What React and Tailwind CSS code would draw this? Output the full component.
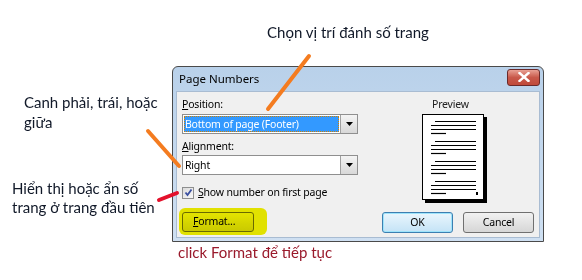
import React from "react";

function ComboArrow() {
  return (
    <div className="w-[17px] h-full border-l border-[#a0a0a0] bg-gradient-to-b from-[#f4f4f4] to-[#d8d8d8] flex items-center justify-center">
      <svg width="7" height="4" viewBox="0 0 7 4"><path d="M0 0h7L3.5 4z" fill="#000" /></svg>
    </div>
  );
}

function PreviewPage() {
  const groups = [121, 141, 161, 181];
  return (
    <svg width="66" height="90" viewBox="0 0 66 90" className="block">
      <rect x="3" y="3" width="62" height="86" fill="#000" />
      <rect x="0.5" y="0.5" width="61" height="85" fill="#fff" stroke="#000" />
      {groups.map((g, i) => {
        const y = g - 114;
        return (
          <g key={i} stroke="#000" strokeWidth="1.2">
            <line x1="13" x2="54" y1={y + 0.5} y2={y + 0.5} />
            <line x1="9" x2="54" y1={y + 4.5} y2={y + 4.5} />
            <line x1="9" x2="54" y1={y + 8.5} y2={y + 8.5} />
            <line x1="9" x2="24" y1={y + 12.5} y2={y + 12.5} />
          </g>
        );
      })}
      <rect x="54" y="78" width="2" height="3" fill="#000" />
    </svg>
  );
}

export default function App() {
  const ui = { fontFamily: '"Noto Sans", "Open Sans", sans-serif' };
  const note = { fontFamily: 'Lato, "Noto Sans", sans-serif' };
  return (
    <div className="relative w-[582px] h-[280px] bg-white overflow-hidden pl-[172px] pt-[66px]">
      {/* Dialog */}
      <div className="w-[372px] h-[176px] rounded-t-[6px] border border-[#4a4a4a] bg-gradient-to-b from-[#b9d1ea] to-[#cfe0f2] flex flex-col" style={ui}>
        <div className="h-[24px] flex items-center justify-between pl-[6px] pr-[3px]">
          <span className="text-[11.5px] text-black leading-none">Page Numbers</span>
          <div className="w-[33px] h-[17px] mb-[4px] rounded-[3px] border border-[#6b2a2a] bg-gradient-to-b from-[#e8a094] via-[#c8584a] to-[#c04a3a] flex items-center justify-center">
            <svg width="12" height="10" viewBox="0 0 12 10">
              <path d="M1.5 1 L10.5 9 M10.5 1 L1.5 9" stroke="#fff" strokeWidth="2.4" strokeLinecap="square" />
            </svg>
          </div>
        </div>
        <div className="flex-1 mx-[3px] mb-[3px] bg-[#f0f0f0] border border-[#a9bcd2] flex pl-[5px] pt-[4px] text-[10.5px] tracking-[-0.2px] text-black">
          <div className="w-[176px] flex flex-col">
            <div className="h-[16px] leading-[16px]"><span className="underline">P</span>osition:</div>
            <div className="mt-[2px] h-[20px] border border-[#8f8f8f] bg-white flex">
              <div className="flex-1 p-[1px]">
                <div className="h-full bg-[#3399ff] text-white leading-[16px] pl-[1px] outline outline-1 outline-dotted outline-[#d08000] -outline-offset-1">Bottom of page (Footer)</div>
              </div>
              <ComboArrow />
            </div>
            <div className="mt-[4px] h-[16px] leading-[16px]"><span className="underline">A</span>lignment:</div>
            <div className="mt-[1px] h-[20px] border border-[#8f8f8f] bg-white flex">
              <div className="flex-1 pl-[2px] leading-[18px]">Right</div>
              <ComboArrow />
            </div>
            <div className="mt-[11px] flex items-center h-[13px]">
              <div className="w-[12px] h-[12px] border border-[#8e8f8f] bg-gradient-to-br from-[#dcdcdc] to-[#f8f8f8] flex items-center justify-center">
                <svg width="9" height="9" viewBox="0 0 9 9"><path d="M1.5 4.5 L3.5 7 L7.5 1.5" stroke="#3a4fa0" strokeWidth="1.8" fill="none" /></svg>
              </div>
              <span className="ml-[4px]"><span className="underline">S</span>how number on first page</span>
            </div>
            <div className="mt-[13px] relative w-[72px] h-[20px]">
              <div className="absolute inset-0 rounded-[3px] border border-[#707070] bg-gradient-to-b from-[#f2f2f2] to-[#d6d6d6] flex items-center pl-[10px]">
                <span><span className="underline">F</span>ormat...</span>
              </div>
              <div className="absolute -left-[3px] -top-[4px] w-[88px] h-[27px] rounded-[6px] bg-[#f0f000] mix-blend-multiply" />
            </div>
          </div>
          <div className="flex-1 flex flex-col">
            <div className="h-[16px] leading-[16px] pl-[74px] text-[#202020]">Preview</div>
            <div className="mt-[2px] ml-[64px]"><PreviewPage /></div>
            <div className="mt-[8px] ml-[24px] flex gap-[10px]">
              <div className="w-[71px] h-[21px] rounded-[3px] border border-[#3c7fb1] bg-gradient-to-b from-[#eaf6fd] to-[#c4e3f6] shadow-[inset_0_0_0_1px_#9ee4fb] flex items-center justify-center">OK</div>
              <div className="w-[71px] h-[21px] rounded-[3px] border border-[#707070] bg-gradient-to-b from-[#f2f2f2] to-[#d6d6d6] flex items-center justify-center">Cancel</div>
            </div>
          </div>
        </div>
      </div>

      {/* Annotations */}
      <div className="absolute left-[267px] top-[23px] text-[15px] leading-[19px] text-[#101828]" style={note}>Chọn vị trí đánh số trang</div>
      <div className="absolute left-[24px] top-[92px] text-[15px] leading-[20px] text-[#101828]" style={note}>Canh phải, trái, hoặc<br />giữa</div>
      <div className="absolute left-[12px] top-[179px] text-[15px] leading-[19px] text-[#101828]" style={note}>Hiển thị hoặc ẩn số<br />trang ở trang đầu tiên</div>
      <div className="absolute left-[178px] top-[243px] text-[15px] leading-[19px] text-[#9a1a2c]" style={note}>click Format để tiếp tục</div>

      <svg className="absolute left-0 top-0 pointer-events-none" width="582" height="280">
        <line x1="309" y1="56" x2="268" y2="109" stroke="#f47c20" strokeWidth="4" strokeLinecap="round" />
        <line x1="148" y1="131" x2="179" y2="166" stroke="#f47c20" strokeWidth="4" strokeLinecap="round" />
        <line x1="159" y1="200" x2="177" y2="193" stroke="#e3112c" strokeWidth="4" strokeLinecap="round" />
      </svg>
    </div>
  );
}
